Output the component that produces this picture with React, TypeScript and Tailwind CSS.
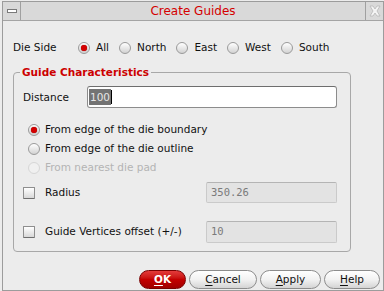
import React from 'react';

const font = "font-['DejaVu_Sans',_'Liberation_Sans',_sans-serif]";

const Radio: React.FC<{ checked?: boolean; disabled?: boolean }> = ({ checked, disabled }) => (
  <span
    className={
      'relative flex w-[12px] h-[12px] shrink-0 items-center justify-center rounded-full border ' +
      (disabled
        ? 'border-[#d6d6d6] bg-[#f0f0f0]'
        : 'border-[#9a9a9a] bg-gradient-to-b from-white to-[#d2d2d2]')
    }
  >
    {checked && <span className="w-[6px] h-[6px] rounded-full bg-[#d40000] shadow-[0_0_1px_#700]" />}
  </span>
);

const Checkbox: React.FC = () => (
  <span className="block w-[12px] h-[12px] shrink-0 rounded-[1px] border border-[#8e8e8e] border-b-[#6e6e6e] bg-gradient-to-b from-white to-[#d8d8d8]" />
);

const Btn: React.FC<{ label: string; w: string; primary?: boolean }> = ({ label, w, primary }) => (
  <button
    className={
      'h-[19px] rounded-full border flex items-center justify-center text-[10.5px] leading-none ' +
      w +
      ' ' +
      (primary
        ? 'border-[#7a0000] bg-gradient-to-b from-[#e43a3a] via-[#c40000] to-[#a00000] text-white font-bold'
        : 'border-[#8c8c8c] bg-gradient-to-b from-white via-[#f2f2f2] to-[#d4d4d4] text-[#111]')
    }
  >
    <span className="underline underline-offset-[2px]">{label[0]}</span>
    <span>{label.slice(1)}</span>
  </button>
);

export default function App() {
  const sides = ['All', 'North', 'East', 'West', 'South'];
  return (
    <div className={`w-[384px] h-[291px] bg-[#ececec] pl-[2px] pt-[1px] ${font} text-[10.5px] text-[#111]`}>
      <div className="w-[382px] h-[290px] border border-[#9c9c9c] flex flex-col">
        {/* title bar */}
        <div className="h-[19px] flex bg-[#d9d9d9] border-b border-[#a4a4a4]">
          <div className="w-[18px] border-r border-[#a0a0a0] flex items-center justify-center">
            <span className="block w-[10px] h-[4px] border border-[#7a7a7a] bg-white" />
          </div>
          <div className="flex-1 flex items-center justify-center text-[12px] text-[#d40000]">Create Guides</div>
          <div className="w-[18px] border-l border-[#a0a0a0] flex items-center justify-center">
            <svg width="12" height="12" viewBox="0 0 12 12">
              <path d="M1 1h3l2 3 2-3h3L8 6l3 5H8L6 8l-2 3H1l3-5z" fill="#f4f4f4" stroke="#b8b8b8" strokeWidth="0.8" />
            </svg>
          </div>
        </div>

        <div className="pl-[10px] pr-[2px] flex flex-col">
          {/* die side row */}
          <div className="mt-[20px] h-[14px] flex items-center">
            <span className="w-[65px]">Die Side</span>
            <div className="flex items-center gap-[10px]">
              {sides.map((s, i) => (
                <span key={s} className="flex items-center gap-[6px]">
                  <Radio checked={i === 0} />
                  <span>{s}</span>
                </span>
              ))}
            </div>
          </div>

          {/* group box */}
          <fieldset className="mt-[10px] w-[338px] h-[187px] border border-[#a8a8a8] rounded-[4px] pl-[9px] pr-[13px]">
            <legend className="-ml-[3px] px-[2px] h-[14px] leading-[14px] font-bold text-[#cc0000]">Guide Characteristics</legend>
            <div className="mt-[7px] flex items-center">
              <span className="w-[64px] pt-[2px]">Distance</span>
              <div className="flex-1 h-[22px] bg-white border border-[#8c8c8c] border-t-[#6e6e6e] rounded-[3px] flex items-center pl-[1px]">
                <span className="h-[16px] leading-[16px] px-[1px] bg-[#737373] text-[#e6e6e6]">100</span>
                <span className="w-[1px] h-[14px] bg-black" />
              </div>
            </div>

            <div className="mt-[12px] flex flex-col">
              <div className="h-[19px] flex items-center pl-[5px] gap-[5px]">
                <Radio checked />
                <span>From edge of the die boundary</span>
              </div>
              <div className="h-[19px] flex items-center pl-[5px] gap-[5px]">
                <Radio />
                <span>From edge of the die outline</span>
              </div>
              <div className="h-[19px] flex items-center pl-[5px] gap-[5px]">
                <Radio disabled />
                <span className="text-[#b4b4b4]">From nearest die pad</span>
              </div>
            </div>

            <div className="mt-[5px] h-[21px] flex items-center">
              <Checkbox />
              <span className="ml-[10px] flex-1">Radius</span>
              <div className="w-[131px] h-[21px] bg-[#e3e3e3] border border-[#cacaca] border-t-[#b4b4b4] rounded-[2px] flex items-center pl-[4px] font-['DejaVu_Sans_Mono',_monospace] text-[10.5px] text-[#7a7a7a]">
                350.26
              </div>
            </div>

            <div className="mt-[18px] h-[22px] flex items-center">
              <Checkbox />
              <span className="ml-[10px] flex-1">Guide Vertices offset (+/-)</span>
              <div className="w-[131px] h-[22px] bg-[#e3e3e3] border border-[#cacaca] border-t-[#b4b4b4] rounded-[2px] flex items-center pl-[4px] font-['DejaVu_Sans_Mono',_monospace] text-[10.5px] text-[#7a7a7a]">
                10
              </div>
            </div>
          </fieldset>

          {/* buttons */}
          <div className="mt-[18px] flex justify-end gap-[3px] pr-[1px]">
            <Btn label="OK" w="w-[47px]" primary />
            <Btn label="Cancel" w="w-[68px]" />
            <Btn label="Apply" w="w-[61px]" />
            <Btn label="Help" w="w-[56px]" />
          </div>
        </div>
      </div>
    </div>
  );
}
